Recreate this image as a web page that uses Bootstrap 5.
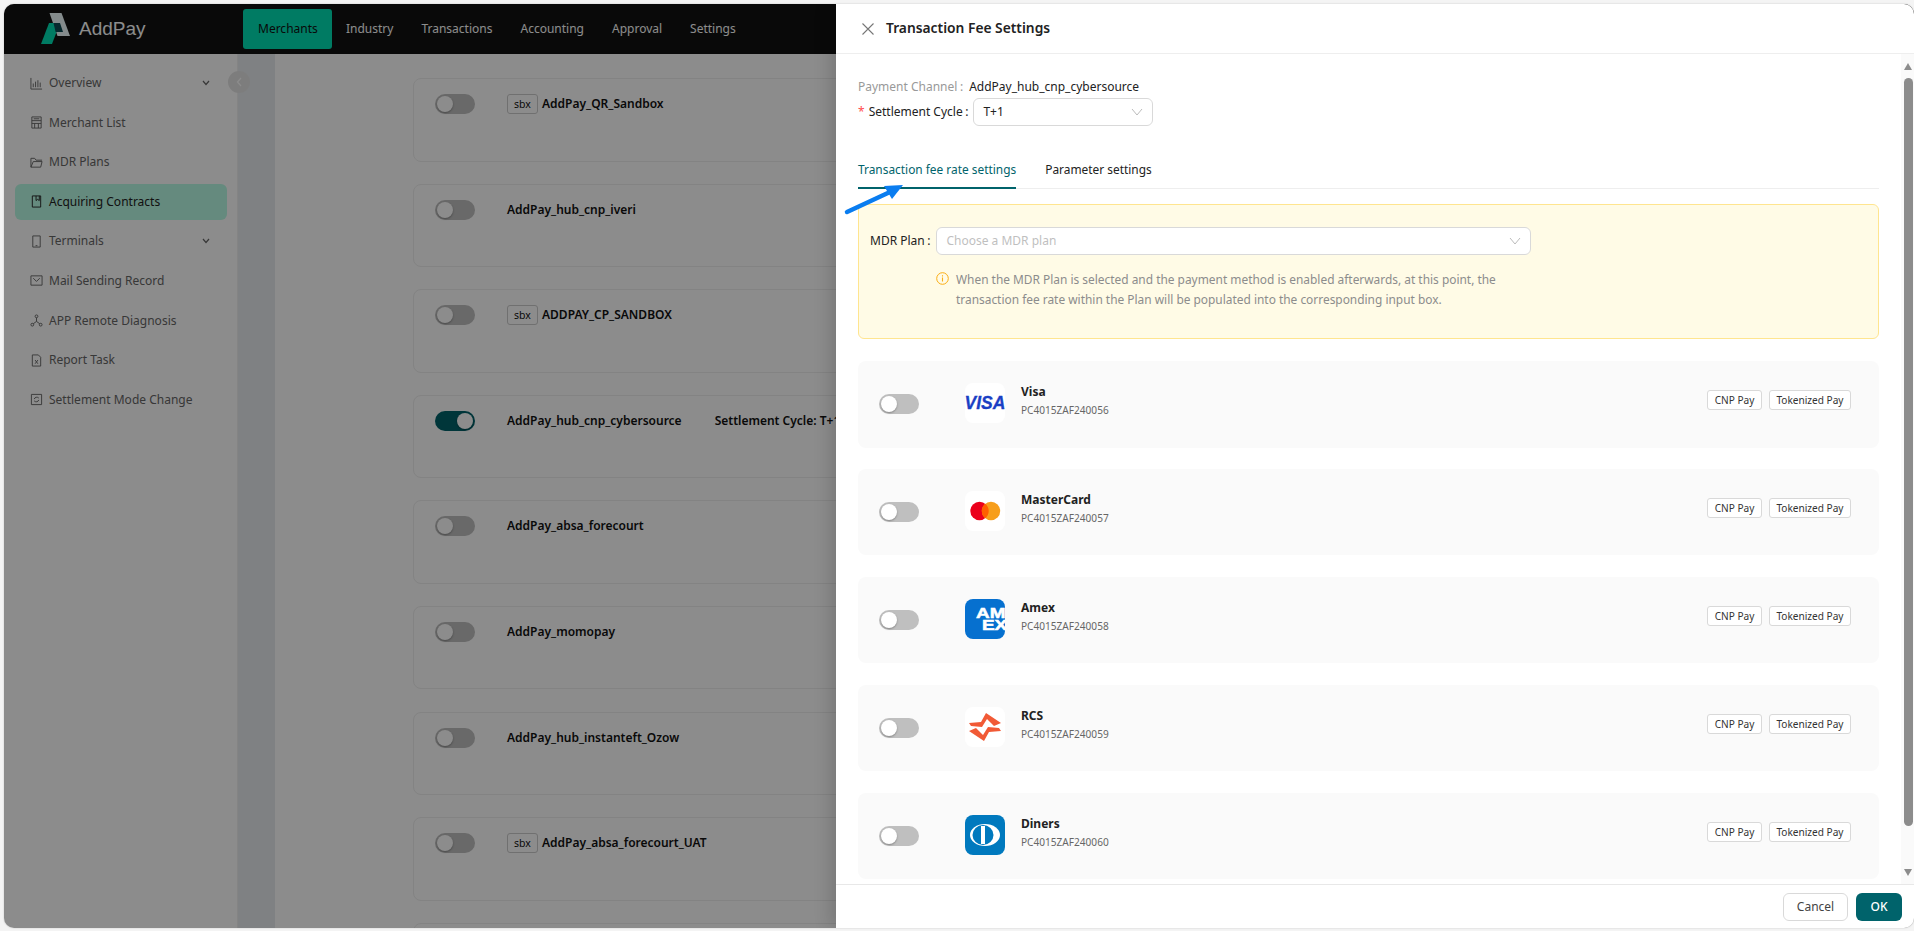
<!DOCTYPE html>
<html lang="en">
<head>
<meta charset="utf-8">
<title>Transaction Fee Settings</title>
<link href="https://cdn.jsdelivr.net/npm/bootstrap@5.3.0/dist/css/bootstrap.min.css" rel="stylesheet">
<style>
html,body{height:931px;overflow:hidden}
body{margin:0;background:#f4f4f4;font-family:"Noto Sans",sans-serif;font-size:12px;color:#222}
.win{position:relative;margin:4px 0 0 4px;height:924px;border-radius:10px;overflow:hidden;background:#fff;box-shadow:0 0 2px rgba(0,0,0,.2)}
.topbar{height:50px;background:#111;color:#fff;flex:none}
.brand{width:239px;padding-left:36px;flex:none}
.brand-name{font-family:"Liberation Sans",sans-serif;font-size:19px;color:#fff;margin-left:7px}
.topnav .nav-link{padding:0 14px;height:40px;line-height:40px;font-size:12px;color:#fff;border-radius:3px}
.topnav .nav-link.active{background:#00e0b4;color:#111;padding:0 15px;width:89px;margin-right:0}
.topnav{margin-top:5px}
.side{width:234px;padding:11px 10px 0 11px;border-right:1px solid #f0f0f0;flex:none}
.side-item{height:36px;margin-bottom:3.6px;padding-left:15px;color:#666;border-radius:6px;font-size:12px}
.side-item svg.ic{width:13px;height:13px;margin-right:6px;flex:none;stroke:#666;fill:none;stroke-width:1}
.side-item.active{background:#b9fbe5;color:#222}
.side-item.active svg.ic{stroke:#222}
.side-item .chev{margin-left:auto;margin-right:17px}
.strip{width:37px;background:#e7ebee;flex:none}
.main{padding:24px 0 0 138px;flex:1;overflow:hidden}
.chan{width:1440px;height:83.5px;margin-bottom:22.1px;border:1px solid #eee;border-radius:8px;padding:15px 21px;font-weight:600;font-size:12px;color:#111}
.chan-name{margin-left:32px;line-height:20px}
.sbx{display:inline-block;border:1px solid #ccc;border-radius:3px;width:31px;height:20px;line-height:18px;text-align:center;font-size:10.5px;font-weight:400;margin-right:4px}
.chan-cycle{margin-left:33px;line-height:20px}
.tgl{display:block;position:relative;width:40px;height:20px;border-radius:10px;background:#bfbfbf;flex:none}
.tgl::after{content:"";position:absolute;left:2px;top:2px;width:16px;height:16px;border-radius:50%;background:#fff;box-shadow:0 1px 2px rgba(0,0,0,.3)}
.tgl.on{background:#00636b}
.tgl.on::after{left:22px}
.collapse-btn{position:absolute;left:224px;top:67px;width:22px;height:22px;border-radius:50%;background:#e4e4e4}
.dim{position:absolute;inset:0;background:rgba(0,0,0,.45)}
.panel{position:absolute;top:0;bottom:0;left:832px;right:0;background:#fff;box-shadow:-6px 0 16px rgba(0,0,0,.14)}
.panel-head{height:50px;border-bottom:1px solid #eee;padding-left:26px;flex:none}
.panel-title{font-size:13.8px;font-weight:600;color:#222;margin-left:12px}
.panel-body{flex:1;overflow:hidden;padding:22px 35px 0 22px}
.panel-foot{height:44px;border-top:1px solid #e8e8e8;padding-right:12px;flex:none}
.kv{height:22px;line-height:22px;font-size:12px}
.muted-l{color:#999}
.colon{margin:0 6px 0 2.5px}
.req{color:#ff4d4f;margin-right:4px}
.pick{height:28px;border:1px solid #d9d9d9;border-radius:6px;background:#fff;padding:0 9px;font-size:12px}
.pick-cycle{width:180px;margin-left:-1px}
.pick-mdr{width:595px;color:#bfbfbf}
.pick svg{margin-left:auto;flex:none}
.tabs{margin-top:24px;border-bottom:1px solid #eee;height:39px}
.tab-x{padding:9px 0 0;line-height:20px;margin-right:29px;font-size:11.9px;color:#222;margin-bottom:-1px}
.tab-x.active{color:#00636b;border-bottom:2px solid #00636b}
.notice{margin-top:15px;height:135px;background:#fffbe6;border:1px solid #ffe58f;border-radius:6px;padding:22px 11px 0}
.notice-text{margin:14px 0 0 66px;line-height:20px;font-size:11.92px;color:#8c8c8c}
.notice-text svg{margin-top:3px;margin-right:7px;flex:none}
.paygap{height:22px}
.paycard{height:86.5px;margin-bottom:21.4px;background:#fafafa;border:0;border-radius:8px;padding-left:21px;padding-right:28px}
.paylogo{width:40px;height:40px;margin-left:46px;border-radius:8px;background:#fff;overflow:hidden;flex:none;margin-top:-2px}
.paylogo svg{display:block}
.payinfo{margin-left:16px;margin-top:-6px}
.payname{font-size:12px;font-weight:700;line-height:18px;color:#222}
.paycode{font-size:10.1px;line-height:18px;color:#666}
.paytags{margin-left:auto;margin-top:-8px;gap:7px}
.paytag{display:block;border:1px solid #d9d9d9;border-radius:3px;background:#fff;height:20px;line-height:18px;padding:0 6.5px;font-size:10.1px;color:#333}
.sb{position:absolute;right:0;top:50px;bottom:44px;width:13px;background:#fafafa}
.sb-thumb{position:absolute;left:3px;right:1px;top:24px;bottom:58px;border-radius:5px;background:#8c8c8c}
.sb-up,.sb-down{position:absolute;left:3px;width:0;height:0;border-left:4.5px solid transparent;border-right:4.5px solid transparent}
.sb-up{top:9px;border-bottom:7px solid #8c8c8c}
.sb-down{bottom:8px;border-top:7px solid #8c8c8c}
.btn-cancel{height:28px;width:65px;padding:0;font-size:12px;background:#fff;border:1px solid #d9d9d9;border-radius:6px;color:#444}
.btn-ok{height:28px;width:46px;padding:0;font-size:12px;font-weight:500;background:#00636b;border:0;border-radius:6px;color:#fff}
.arrow{position:absolute;left:838px;top:178px;pointer-events:none}
</style>
</head>
<body>
<div class="win">
  <div class="d-flex flex-column h-100">
    <header class="topbar d-flex">
      <div class="brand d-flex align-items-center">
        <svg width="32" height="32" viewBox="0 0 32 32"><polygon points="9.5,0 21.5,0 30,23 17.5,23" fill="#f0fdff"/><polygon points="1,31 9,10 20,10 12,31" fill="#00e0b4"/><polygon points="13.5,10 20,10 23,19 15.6,19" fill="#0b4b55"/></svg>
        <span class="brand-name">AddPay</span>
      </div>
      <nav class="nav topnav">
        <a class="nav-link active" href="#">Merchants</a>
        <a class="nav-link" href="#">Industry</a>
        <a class="nav-link" href="#">Transactions</a>
        <a class="nav-link" href="#">Accounting</a>
        <a class="nav-link" href="#">Approval</a>
        <a class="nav-link" href="#">Settings</a>
      </nav>
    </header>
    <div class="d-flex flex-grow-1 overflow-hidden">
      <aside class="side">
        <div class="side-item d-flex align-items-center"><svg class="ic" viewBox="0 0 14 14"><path d="M1 1v12h12M3.500 11V7M6 11V5M8.500 11V3.500M11 11V6"/></svg>Overview<svg class="chev" width="8" height="6" viewBox="0 0 8 6"><path d="M1 1l3 3.500L7 1" fill="none" stroke="#666" stroke-width="1.200"/></svg></div>
        <div class="side-item d-flex align-items-center"><svg class="ic" viewBox="0 0 14 14"><path d="M2 1h10v12H2zM2 5h10M2 8h10M5 8v5M9 8v5M4 3h6"/></svg>Merchant List</div>
        <div class="side-item d-flex align-items-center"><svg class="ic" viewBox="0 0 14 14"><path d="M1 12V2.500h4l1.500 2H13M1 12h10.500l1.500-6H3.500L1 12z"/></svg>MDR Plans</div>
        <div class="side-item active d-flex align-items-center"><svg class="ic" viewBox="0 0 14 14"><path d="M2.500 1h9v12h-9zM6.500 1v5l1.700-1.300L10 6V1"/></svg>Acquiring Contracts</div>
        <div class="side-item d-flex align-items-center"><svg class="ic" viewBox="0 0 14 14"><path d="M3 1h8v12H3zM6 11.500h2"/></svg>Terminals<svg class="chev" width="8" height="6" viewBox="0 0 8 6"><path d="M1 1l3 3.500L7 1" fill="none" stroke="#666" stroke-width="1.200"/></svg></div>
        <div class="side-item d-flex align-items-center"><svg class="ic" viewBox="0 0 14 14"><path d="M1 2h12v10H1zM3.500 4.500L7 8l3.500-3.500"/></svg>Mail Sending Record</div>
        <div class="side-item d-flex align-items-center"><svg class="ic" viewBox="0 0 14 14"><circle cx="7" cy="2.500" r="1.500"/><circle cx="2.500" cy="11.500" r="1.500"/><circle cx="11.500" cy="11.500" r="1.500"/><path d="M7 4v4M7 8L3.500 10.500M7 8l3.500 2.500"/></svg>APP Remote Diagnosis</div>
        <div class="side-item d-flex align-items-center"><svg class="ic" viewBox="0 0 14 14"><path d="M2.500 1H9l2.500 2.500V13h-9zM5.500 6.500l3 4M8.500 6.500l-3 4"/></svg>Report Task</div>
        <div class="side-item d-flex align-items-center"><svg class="ic" viewBox="0 0 14 14"><path d="M1.500 1.500h11v11h-11zM9.500 5.500A3 3 0 0 0 4.500 6.500M4.500 8.500A3 3 0 0 0 9.500 7.500"/></svg>Settlement Mode Change</div>
      </aside>
      <div class="strip"></div>
      <main class="main">
        <div class="chan d-flex align-items-start"><span class="tgl"></span><div class="chan-name"><span class="sbx">sbx</span>AddPay_QR_Sandbox</div></div>
        <div class="chan d-flex align-items-start"><span class="tgl"></span><div class="chan-name">AddPay_hub_cnp_iveri</div></div>
        <div class="chan d-flex align-items-start"><span class="tgl"></span><div class="chan-name"><span class="sbx">sbx</span>ADDPAY_CP_SANDBOX</div></div>
        <div class="chan d-flex align-items-start"><span class="tgl on"></span><div class="chan-name">AddPay_hub_cnp_cybersource</div><div class="chan-cycle">Settlement Cycle: T+1</div></div>
        <div class="chan d-flex align-items-start"><span class="tgl"></span><div class="chan-name">AddPay_absa_forecourt</div></div>
        <div class="chan d-flex align-items-start"><span class="tgl"></span><div class="chan-name">AddPay_momopay</div></div>
        <div class="chan d-flex align-items-start"><span class="tgl"></span><div class="chan-name">AddPay_hub_instanteft_Ozow</div></div>
        <div class="chan d-flex align-items-start"><span class="tgl"></span><div class="chan-name"><span class="sbx">sbx</span>AddPay_absa_forecourt_UAT</div></div>
        <div class="chan"></div>
      </main>
    </div>
  </div>
  <div class="collapse-btn d-flex align-items-center justify-content-center"><svg width="6" height="10" viewBox="0 0 6 10"><path d="M5 1L1.500 5 5 9" fill="none" stroke="#fff" stroke-width="1.200"/></svg></div>
  <div class="dim"></div>
  <section class="panel d-flex flex-column">
    <div class="panel-head d-flex align-items-center">
      <svg width="12" height="12" viewBox="0 0 12 12"><path d="M.5.5l11 11M11.500.5l-11 11" stroke="#777" stroke-width="1.100" fill="none"/></svg>
      <span class="panel-title">Transaction Fee Settings</span>
    </div>
    <div class="panel-body">
      <div class="kv d-flex"><span class="muted-l">Payment Channel</span><span class="muted-l colon">:</span><span>AddPay_hub_cnp_cybersource</span></div>
      <div class="d-flex align-items-center">
        <span class="req">*</span><span>Settlement Cycle</span><span class="colon">:</span>
        <div class="pick pick-cycle d-flex align-items-center">T+1<svg width="12" height="8" viewBox="0 0 12 8"><path d="M1 1l5 6 5-6" fill="none" stroke="#bbb" stroke-width="1"/></svg></div>
      </div>
      <div class="tabs d-flex">
        <div class="tab-x active">Transaction fee rate settings</div>
        <div class="tab-x">Parameter settings</div>
      </div>
      <div class="notice">
        <div class="d-flex align-items-center"><span>MDR Plan</span><span class="colon">:</span><div class="pick pick-mdr d-flex align-items-center">Choose a MDR plan<svg width="12" height="8" viewBox="0 0 12 8"><path d="M1 1l5 6 5-6" fill="none" stroke="#bbb" stroke-width="1"/></svg></div></div>
        <div class="notice-text d-flex">
          <svg width="13" height="13" viewBox="0 0 13 13"><circle cx="6.500" cy="6.500" r="5.800" fill="none" stroke="#faad14" stroke-width="1"/><path d="M6.500 5.500v4M6.500 3.300v1.100" stroke="#faad14" stroke-width="1.100"/></svg>
          <div>When the MDR Plan is selected and the payment method is enabled afterwards, at this point, the<br>transaction fee rate within the Plan will be populated into the corresponding input box.</div>
        </div>
      </div>
      <div class="paygap"></div>
      <div class="paycard d-flex align-items-center">
        <span class="tgl"></span>
        <div class="paylogo"><svg width="40" height="40" viewBox="0 0 40 40"><text x="20" y="26" text-anchor="middle" font-family="Liberation Sans" font-weight="700" font-style="italic" font-size="17.500" fill="#1a3fc4" stroke="#1a3fc4" stroke-width=".3">VISA</text></svg></div>
        <div class="payinfo"><div class="payname">Visa</div><div class="paycode">PC4015ZAF240056</div></div>
        <div class="paytags d-flex"><span class="paytag">CNP Pay</span><span class="paytag">Tokenized Pay</span></div>
      </div>
      <div class="paycard d-flex align-items-center">
        <span class="tgl"></span>
        <div class="paylogo"><svg width="40" height="40" viewBox="0 0 40 40"><circle cx="14.500" cy="20" r="9.200" fill="#eb001b"/><circle cx="26" cy="20" r="9.200" fill="#f79e1b"/><path d="M20.250 12.800a9.200 9.200 0 0 1 0 14.400a9.200 9.200 0 0 1 0-14.400z" fill="#ff5f00"/></svg></div>
        <div class="payinfo"><div class="payname">MasterCard</div><div class="paycode">PC4015ZAF240057</div></div>
        <div class="paytags d-flex"><span class="paytag">CNP Pay</span><span class="paytag">Tokenized Pay</span></div>
      </div>
      <div class="paycard d-flex align-items-center">
        <span class="tgl"></span>
        <div class="paylogo"><svg width="40" height="40" viewBox="0 0 40 40"><rect width="40" height="40" fill="#0670cf"/><g font-family="Liberation Sans" font-weight="700" font-size="14" fill="#fff" stroke="#fff" stroke-width=".5"><text transform="translate(11 19) scale(1.350 1)">AM</text><text transform="translate(17 31) scale(1.350 1)">EX</text></g></svg></div>
        <div class="payinfo"><div class="payname">Amex</div><div class="paycode">PC4015ZAF240058</div></div>
        <div class="paytags d-flex"><span class="paytag">CNP Pay</span><span class="paytag">Tokenized Pay</span></div>
      </div>
      <div class="paycard d-flex align-items-center">
        <span class="tgl"></span>
        <div class="paylogo"><svg width="40" height="40" viewBox="0 0 40 40"><g fill="#f15a36"><polygon points="4,16 16,15 21,6 36,16 29,19 22,12 17,20 6,19"/><polygon points="36,24 24,25 19,34 4,24 11,21 18,28 23,20 34,21"/></g></svg></div>
        <div class="payinfo"><div class="payname">RCS</div><div class="paycode">PC4015ZAF240059</div></div>
        <div class="paytags d-flex"><span class="paytag">CNP Pay</span><span class="paytag">Tokenized Pay</span></div>
      </div>
      <div class="paycard d-flex align-items-center">
        <span class="tgl"></span>
        <div class="paylogo"><svg width="40" height="40" viewBox="0 0 40 40"><rect width="40" height="40" fill="#0079be"/><ellipse cx="20" cy="20" rx="15" ry="11" fill="#fff"/><ellipse cx="18" cy="20" rx="10.500" ry="10" fill="#0079be"/><rect x="16" y="11" width="4" height="18" fill="#fff"/></svg></div>
        <div class="payinfo"><div class="payname">Diners</div><div class="paycode">PC4015ZAF240060</div></div>
        <div class="paytags d-flex"><span class="paytag">CNP Pay</span><span class="paytag">Tokenized Pay</span></div>
      </div>
    </div>
    <div class="panel-foot d-flex align-items-center justify-content-end gap-2">
      <button class="btn btn-cancel" type="button">Cancel</button>
      <button class="btn btn-ok" type="button">OK</button>
    </div>
    <div class="sb"><div class="sb-up"></div><div class="sb-thumb"></div><div class="sb-down"></div></div>
  </section>
  <svg class="arrow" width="70" height="40" viewBox="0 0 70 40"><path d="M5 30L48 10" stroke="#0a7df0" stroke-width="4.500" stroke-linecap="round"/><polygon points="61,3 42,4 50,17" fill="#0a7df0"/></svg>
</div>
<script src="https://cdn.jsdelivr.net/npm/bootstrap@5.3.0/dist/js/bootstrap.bundle.min.js"></script>
</body>
</html>
